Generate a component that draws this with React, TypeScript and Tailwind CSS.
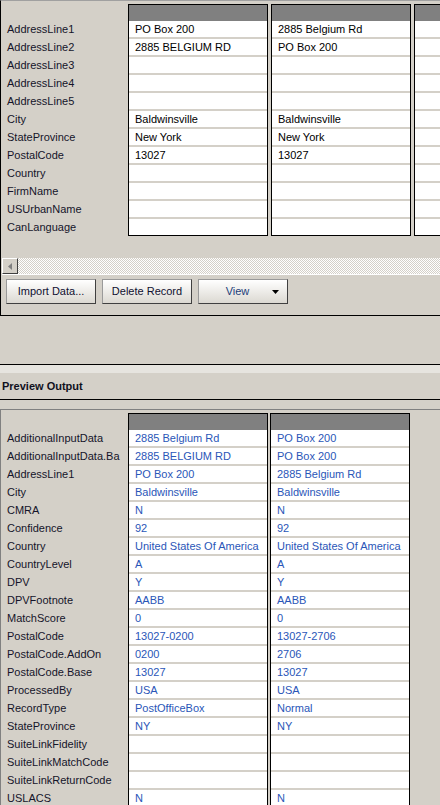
import React from 'react';

const font = { fontFamily: '"Liberation Sans", Arial, sans-serif' };

const inputLabels = [
  'AddressLine1', 'AddressLine2', 'AddressLine3', 'AddressLine4', 'AddressLine5',
  'City', 'StateProvince', 'PostalCode', 'Country', 'FirmName', 'USUrbanName', 'CanLanguage',
];

const inputRecords: string[][] = [
  ['PO Box 200', '2885 BELGIUM RD', '', '', '', 'Baldwinsville', 'New York', '13027', '', '', '', ''],
  ['2885 Belgium Rd', 'PO Box 200', '', '', '', 'Baldwinsville', 'New York', '13027', '', '', '', ''],
  ['', '', '', '', '', '', '', '', '', '', '', ''],
];

// second label is clipped by the grid in the original
const outputLabels = [
  'AdditionalInputData', 'AdditionalInputData.Ba', 'AddressLine1', 'City', 'CMRA', 'Confidence',
  'Country', 'CountryLevel', 'DPV', 'DPVFootnote', 'MatchScore', 'PostalCode', 'PostalCode.AddOn',
  'PostalCode.Base', 'ProcessedBy', 'RecordType', 'StateProvince', 'SuiteLinkFidelity',
  'SuiteLinkMatchCode', 'SuiteLinkReturnCode', 'USLACS',
];

const outputRecords: string[][] = [
  ['2885 Belgium Rd', '2885 BELGIUM RD', 'PO Box 200', 'Baldwinsville', 'N', '92', 'United States Of America',
    'A', 'Y', 'AABB', '0', '13027-0200', '0200', '13027', 'USA', 'PostOfficeBox', 'NY', '', '', '', 'N'],
  ['PO Box 200', 'PO Box 200', '2885 Belgium Rd', 'Baldwinsville', 'N', '92', 'United States Of America',
    'A', 'Y', 'AABB', '0', '13027-2706', '2706', '13027', 'USA', 'Normal', 'NY', '', '', '', 'N'],
];

const LabelColumn: React.FC<{ labels: string[] }> = ({ labels }) => (
  <div className="w-[127px] shrink-0 overflow-hidden pt-[17px] pl-[6px]">
    {labels.map((l) => (
      <div key={l} className="h-[18px] leading-[16px] whitespace-nowrap text-[#14142a]">{l}</div>
    ))}
  </div>
);

const RecordCard: React.FC<{ values: string[]; blue?: boolean }> = ({ values, blue }) => (
  <div className="w-[140px] shrink-0 border border-black bg-[#d4d0c8] self-start">
    <div className="h-[16px] bg-[#808080]" />
    <div className="flex flex-col gap-[2px]">
      {values.map((v, i) => (
        <div
          key={i}
          className={`h-[16px] bg-white pl-[6px] leading-[16px] whitespace-nowrap overflow-hidden ${blue ? 'text-[#2a56b8]' : 'text-black'}`}
        >
          {v}
        </div>
      ))}
    </div>
  </div>
);

const Button: React.FC<{ children: React.ReactNode }> = ({ children }) => (
  <div className="w-[90px] h-[25px] flex items-center justify-center border border-[#9a9a9a] border-r-[#404040] border-b-[#404040] bg-linear-to-b from-white to-[#dcd9d2] text-[#101030]">
    {children}
  </div>
);

export default function App() {
  return (
    <div className="w-[440px] h-[805px] overflow-hidden bg-[#d4d0c8] text-[11px] flex flex-col" style={font}>
      {/* input panel */}
      <div className="h-[316px] shrink-0 border-t border-t-[#a0a0a0] border-l border-l-black border-b border-b-black pt-[3px] flex flex-col">
        <div className="flex">
          <LabelColumn labels={inputLabels} />
          <div className="flex gap-[3px]">
            {inputRecords.map((r, i) => (
              <RecordCard key={i} values={r} />
            ))}
          </div>
        </div>
        <div className="mt-[21px] ml-px h-[17px] flex border-b border-b-white">
          <div className="w-[16px] h-[16px] border border-t-white border-l-white border-r-[#404040] border-b-[#404040] bg-[#d4d0c8] flex items-center justify-center">
            <svg width="4" height="7" viewBox="0 0 4 7"><path d="M4 0 L0 3.5 L4 7 Z" fill="#808080" /></svg>
          </div>
          <div className="flex-1 bg-[repeating-conic-gradient(#ffffff_0_25%,#d4d0c8_0_50%)] bg-size-[2px_2px]" />
        </div>
        <div className="mt-[4px] ml-[5px] flex gap-[6px]">
          <Button>Import Data...</Button>
          <Button>Delete Record</Button>
          <div className="w-[90px] h-[25px] flex items-center border border-[#9a9a9a] border-r-[#404040] border-b-[#404040] bg-linear-to-b from-white to-[#dcd9d2] text-[#22407a]">
            <span className="flex-1 text-center pl-[4px]">View</span>
            <svg width="7" height="4" viewBox="0 0 7 4" className="mr-[8px]"><path d="M0 0 H7 L3.5 4 Z" fill="#000" /></svg>
          </div>
        </div>
      </div>

      <div className="h-[48px] shrink-0" />

      {/* preview header */}
      <div className="h-px bg-black shrink-0" />
      <div className="h-[8px] bg-[#e6e4df] shrink-0" />
      <div className="h-[26px] shrink-0 flex items-center pl-[2px] font-bold text-[#101020]">Preview Output</div>
      <div className="h-px bg-black shrink-0" />
      <div className="h-[9px] shrink-0" />

      {/* output panel */}
      <div className="flex-1 border-t border-l border-[#808080] pt-[3px]">
        <div className="flex">
          <LabelColumn labels={outputLabels} />
          <div className="flex gap-[2px]">
            {outputRecords.map((r, i) => (
              <RecordCard key={i} values={r} blue />
            ))}
          </div>
        </div>
      </div>
    </div>
  );
}
